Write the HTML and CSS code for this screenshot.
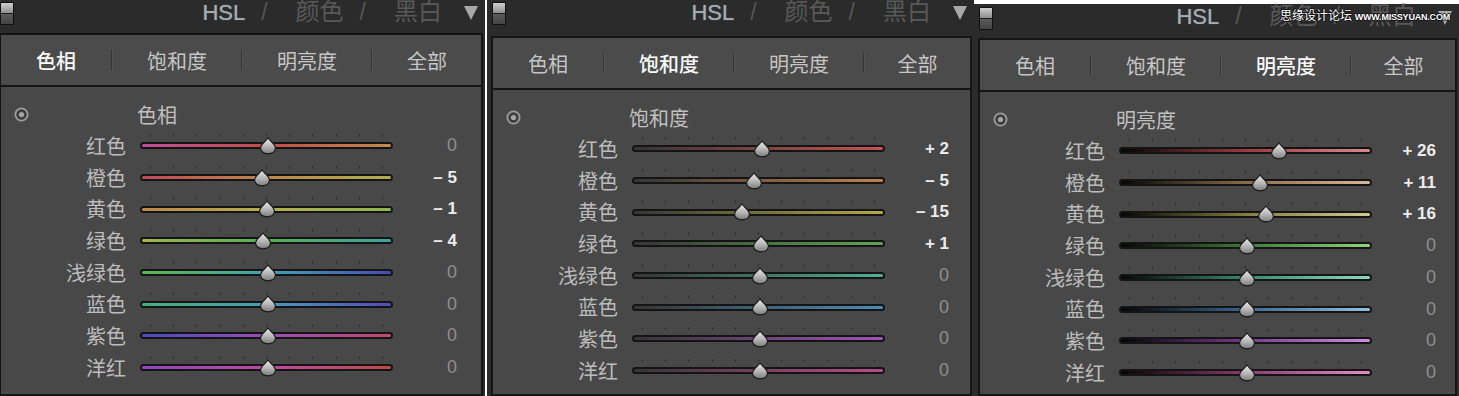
FILE: index.html
```html
<!DOCTYPE html>
<html lang="zh-CN">
<head>
  <meta charset="UTF-8" />
  <title>HSL</title>
  <link rel="stylesheet" href="styles.css">
</head>
<body>
  <!-- shared gradient for the slider knobs -->
  <svg class="defs" width="0" height="0">
    <defs>
      <linearGradient id="knob" x1="0" y1="0" x2="0" y2="1">
        <stop offset="0" stop-color="#ececec"/>
        <stop offset="0.55" stop-color="#b4b4b4"/>
        <stop offset="1" stop-color="#7c7c7c"/>
      </linearGradient>
    </defs>
  </svg>

  <div class="strip">
    <section class="panel p-hue">
      <header class="head">
        <span class="toggle"></span>
        <nav class="modes">
          <span class="mode hsl">HSL</span><span class="slash">/</span><span class="mode">颜色</span><span class="slash">/</span><span class="mode">黑白</span>
        </nav>
        <span class="caret"></span>
      </header>
      <div class="tabs">
        <span class="tab on">色相</span><i class="sep"></i><span class="tab">饱和度</span><i class="sep"></i><span class="tab">明亮度</span><i class="sep"></i><span class="tab">全部</span>
      </div>
      <div class="body">
        <div class="row title-row">
          <svg class="target" width="15" height="15" viewBox="0 0 15 15"><circle cx="7.5" cy="7.5" r="6.1" fill="#3d3d3d" stroke="#9c9c9c" stroke-width="1.8"/><circle cx="7.5" cy="7.5" r="2.6" fill="#a6a6a6"/></svg>
          <span class="title">色相</span>
        </div>
        <div class="rows" data-set="hue"></div>
      </div>
    </section>

    <section class="panel p-sat">
      <header class="head">
        <span class="toggle"></span>
        <nav class="modes">
          <span class="mode hsl">HSL</span><span class="slash">/</span><span class="mode">颜色</span><span class="slash">/</span><span class="mode">黑白</span>
        </nav>
        <span class="caret"></span>
      </header>
      <div class="tabs">
        <span class="tab">色相</span><i class="sep"></i><span class="tab on">饱和度</span><i class="sep"></i><span class="tab">明亮度</span><i class="sep"></i><span class="tab">全部</span>
      </div>
      <div class="body">
        <div class="row title-row">
          <svg class="target" width="15" height="15" viewBox="0 0 15 15"><circle cx="7.5" cy="7.5" r="6.1" fill="#3d3d3d" stroke="#9c9c9c" stroke-width="1.8"/><circle cx="7.5" cy="7.5" r="2.6" fill="#a6a6a6"/></svg>
          <span class="title">饱和度</span>
        </div>
        <div class="rows" data-set="sat"></div>
      </div>
    </section>

    <section class="panel p-lum">
      <header class="head">
        <span class="toggle"></span>
        <nav class="modes">
          <span class="mode hsl">HSL</span><span class="slash">/</span><span class="mode">颜色</span><span class="slash">/</span><span class="mode">黑白</span>
        </nav>
        <span class="caret"></span>
      </header>
      <div class="mark">思缘设计论坛 <b>WWW.MISSYUAN.COM</b></div>
      <div class="tabs">
        <span class="tab">色相</span><i class="sep"></i><span class="tab">饱和度</span><i class="sep"></i><span class="tab on">明亮度</span><i class="sep"></i><span class="tab">全部</span>
      </div>
      <div class="body">
        <div class="row title-row">
          <svg class="target" width="15" height="15" viewBox="0 0 15 15"><circle cx="7.5" cy="7.5" r="6.1" fill="#3d3d3d" stroke="#9c9c9c" stroke-width="1.8"/><circle cx="7.5" cy="7.5" r="2.6" fill="#a6a6a6"/></svg>
          <span class="title">明亮度</span>
        </div>
        <div class="rows" data-set="lum"></div>
      </div>
    </section>
  </div>

  <script>
const names = ['红色', '橙色', '黄色', '绿色', '浅绿色', '蓝色', '紫色', '洋红'];

// 每个面板: 数值 + 滑块颜色
const sets = {
  hue: {
    values: [0, -5, -1, -4, 0, 0, 0, 0],
    tracks: [
      ['#bf5096', '#bf4e4c', '#c08a4e'],
      ['#bf4a58', '#c0864c', '#b0b04e'],
      ['#c0884c', '#b4ae4c', '#8cb64e'],
      ['#a2b64c', '#52ae56', '#42a2a0'],
      ['#5cb64e', '#42a5ae', '#4849b8'],
      ['#46ae7a', '#449eb8', '#5649bb'],
      ['#4a4bbb', '#9a4cb8', '#bf4a6c'],
      ['#8e46be', '#bd4aa0', '#bf4a4a']
    ]
  },
  sat: {
    values: [2, -5, -15, 1, 0, 0, 0, 0],
    tracks: [
      ['#363636', '#c65252'],
      ['#363636', '#c0824a'],
      ['#363636', '#b4a844'],
      ['#363636', '#5ea552'],
      ['#363636', '#4fb192'],
      ['#363636', '#4a8bb8'],
      ['#363636', '#a052b8'],
      ['#363636', '#b84c88']
    ]
  },
  lum: {
    values: [26, 11, 16, 0, 0, 0, 0, 0],
    tracks: [
      ['#060606', '#983c3c', '#d88a8a'],
      ['#060606', '#8a6a48', '#d6b694'],
      ['#060606', '#847c40', '#d2c88e'],
      ['#060606', '#3e7a38', '#8ed47e'],
      ['#060606', '#3a8a70', '#8cd8be'],
      ['#060606', '#386890', '#90c2e2'],
      ['#060606', '#763a8a', '#d08ee2'],
      ['#060606', '#8a3a6e', '#e28cc4']
    ]
  }
};

const knob = '<svg class="thumb" width="18" height="18" viewBox="0 0 18 18">' +
  '<path d="M9 1 C10.6 3.6 16.4 7.2 16.4 11 C16.4 14.6 13.2 16.8 9 16.8 C4.8 16.8 1.6 14.6 1.6 11 C1.6 7.2 7.4 3.6 9 1 Z" fill="url(#knob)" stroke="#1a1a1a" stroke-width="1.2"/></svg>';

function fmt(v) {
  if (v > 0) return '+ ' + v;
  if (v < 0) return '\u2013 ' + Math.abs(v);
  return '0';
}

document.querySelectorAll('.rows').forEach(box => {
  const set = sets[box.dataset.set];
  names.forEach((name, i) => {
    const v = set.values[i];
    const row = document.createElement('div');
    row.className = 'row';
    row.innerHTML =
      '<span class="label">' + name + '</span>' +
      '<div class="slider"><div class="ticks">' + '<i></i>'.repeat(11) + '</div>' +
      '<div class="track"></div>' + knob + '</div>' +
      '<span class="value' + (v === 0 ? ' zero' : '') + '">' + fmt(v) + '</span>';
    row.querySelector('.track').style.background = 'linear-gradient(90deg, ' + set.tracks[i].join(', ') + ')';
    row.querySelector('.thumb').style.left = (50.6 + v * 0.48) + '%';
    box.appendChild(row);
  });
});
  </script>
</body>
</html>
```

FILE: styles.css
```css
* {
  box-sizing: border-box;
}

body {
  margin: 0;
  background: #fff;
  overflow: hidden;
  font-family: "Noto Sans CJK SC", "Liberation Sans", sans-serif;
}

.defs {
  position: absolute;
  width: 0;
  height: 0;
}

.strip {
  display: flex;
  height: 396px;
}

/* 面板 */
.panel {
  position: relative;
  display: flex;
  flex-direction: column;
  height: 396px;
  padding: 0 2px 0 4px;
  background: #2b2b2b;
}
.p-hue {
  width: 490px;
  margin-left: -5px;
  margin-right: 2px;
}
.p-sat {
  width: 487px;
}
.p-lum {
  width: 485px;
  height: 392px;
  margin-top: 4px;
}

/* 顶部 HSL / 颜色 / 黑白 */
.head {
  display: flex;
  align-items: flex-start;
  height: 33px;
  padding: 2px 5px 0 1px;
}
.p-sat .head {
  height: 36px;
}
.p-lum .head {
  height: 34px;
  padding-top: 3px;
}
.toggle {
  width: 14px;
  height: 23px;
  border: 1px solid #101010;
  border-radius: 1px;
  background: linear-gradient(#cfcfcf, #8e8e8e 48%, #1c1c1c 48%, #1c1c1c 54%, #5a5a5a 54%, #444 100%);
}
.modes {
  display: flex;
  align-items: baseline;
  margin-left: auto;
  line-height: 28px;
  margin-top: -6px;
}
.p-lum .modes {
  margin-top: -7px;
}
.mode {
  font-size: 24px;
  color: #595959;
}
.mode.hsl {
  font-family: "Liberation Sans", sans-serif;
  font-size: 22px;
  color: #a4adb4;
  text-shadow: 0 0 1px #7e8a94;
}
.slash {
  font-family: "Liberation Sans", sans-serif;
  font-size: 23px;
  color: #565656;
  margin: 0 28px 0 16px;
}
.caret {
  width: 0;
  height: 0;
  margin: 4px 0 0 22px;
  border-left: 7.5px solid transparent;
  border-right: 7.5px solid transparent;
  border-top: 14px solid #a8a8a8;
}
.mark {
  position: absolute;
  top: 4px;
  right: 9px;
  font-size: 12px;
  line-height: 14px;
  color: #fff;
  text-shadow: 1px 0 #111, -1px 0 #111, 0 1px #111, 0 -1px #111;
}
.mark b {
  font-family: "Liberation Sans", sans-serif;
  font-size: 9px;
  letter-spacing: -0.2px;
}

/* 色相 | 饱和度 | 明亮度 | 全部 */
.tabs {
  display: grid;
  grid-template-columns: 110px 2px 128px 2px 128px 2px 1fr;
  align-items: center;
  height: 54px;
  border: 2px solid #151515;
  background: #4b4b4b;
}
.tab {
  text-align: center;
  font-size: 20px;
  color: #c6c6c6;
}
.tab.on {
  color: #fafafa;
  font-weight: 500;
}
.sep {
  height: 20px;
  background: #343434;
  border-right: 1px solid #555;
}

/* 滑块区域 */
.body {
  flex: 1;
  padding-top: 12px;
  border: 2px solid #151515;
  border-top: none;
  background: #484848;
}
.row {
  display: grid;
  grid-template-columns: 125px 253px 50px;
  column-gap: 14px;
  align-items: center;
  height: 31.7px;
}
.title-row {
  height: 31px;
}
.target {
  margin-left: 13px;
}
.title {
  margin-left: -3px;
  font-size: 20px;
  color: #c0c0c0;
}
.label {
  text-align: right;
  font-size: 20px;
  line-height: 1;
  color: #bcbcbc;
}
.value {
  text-align: right;
  font-family: "Liberation Sans", sans-serif;
  font-size: 17px;
  font-weight: bold;
  color: #ececec;
}
.value.zero {
  font-size: 18px;
  font-weight: normal;
  color: #8e8e8e;
}
.slider {
  position: relative;
  display: flex;
  align-items: center;
  height: 100%;
}
.track {
  flex: 1;
  height: 7px;
  border: 2px solid #141414;
  border-radius: 4px;
}
.ticks {
  position: absolute;
  top: calc(50% - 12px);
  left: 10px;
  right: 10px;
  display: flex;
  justify-content: space-between;
}
.ticks i {
  width: 1px;
  height: 3px;
  background: #2f2f2f;
}
.thumb {
  position: absolute;
  top: 50%;
  transform: translate(-50%, -50%);
}
```
